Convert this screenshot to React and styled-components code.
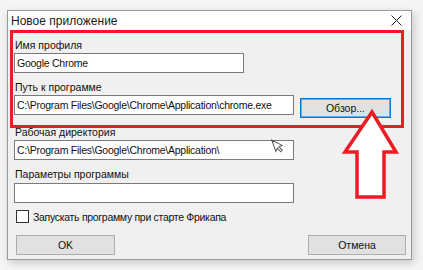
import styled, { createGlobalStyle } from 'styled-components';

const GlobalStyle = createGlobalStyle`
  html, body {
    margin: 0;
    padding: 0;
    background: #f4f4f4;
    font-family: "Liberation Sans", Arial, sans-serif;
  }
`;

const Page = styled.div`
  position: relative;
  width: 423px;
  height: 270px;
  padding: 10px 11px 10px 7px;
  box-sizing: border-box;
  overflow: hidden;
`;

const Window = styled.div`
  width: 405px;
  height: 250px;
  box-sizing: border-box;
  border: 1px solid #9a9a9a;
  background: #f0f0f0;
  box-shadow: 2px 3px 8px rgba(0, 0, 0, 0.18);
  display: flex;
  flex-direction: column;
`;

const TitleBar = styled.div`
  height: 19px;
  background: #fff;
  display: flex;
  align-items: center;
  justify-content: space-between;
  padding: 0 9px 0 3px;
  font-size: 12px;
  color: #1a1a1a;
`;

const Body = styled.div`
  flex: 1;
  display: flex;
  flex-direction: column;
  padding: 0 7px 0 2px;
`;

const RedFrame = styled.div`
  border: 3px solid #ec1c24;
  padding: 6px 0 7px 1px;
  display: flex;
  flex-direction: column;
`;

const Fields = styled.div`
  display: flex;
  flex-direction: column;
  padding-left: 4px;
`;

const Label = styled.div`
  font-size: 10.5px;
  line-height: 13px;
  height: 13px;
  color: #111;
  padding-left: 1px;
  margin-top: ${p => p.$gap || 0}px;
  margin-bottom: ${p => p.$below || 1}px;
`;

const Input = styled.div`
  width: ${p => p.$w}px;
  height: 20px;
  box-sizing: border-box;
  border: 1px solid #7a7a7a;
  background: #fff;
  font-size: 10.5px;
  letter-spacing: -0.25px;
  line-height: 18px;
  padding-left: 2px;
  color: #111;
  white-space: nowrap;
  overflow: hidden;
`;

const Row = styled.div`
  display: flex;
  align-items: flex-start;
  gap: 6px;
`;

const Button = styled.div`
  width: ${p => p.$w}px;
  height: 20px;
  box-sizing: border-box;
  margin-top: ${p => p.$top || 0}px;
  background: #e1e1e1;
  border: 1px solid ${p => (p.$focus ? '#0078d7' : '#adadad')};
  box-shadow: ${p => (p.$focus ? 'inset 0 0 0 1px #6aa8e0' : 'none')};
  display: flex;
  align-items: center;
  justify-content: center;
  font-size: 10.5px;
  color: #111;
`;

const CheckRow = styled.div`
  display: flex;
  align-items: center;
  gap: 4px;
  margin-top: 7px;
  padding-left: 2px;
  font-size: 10.5px;
  letter-spacing: -0.3px;
  color: #111;
`;

const Box = styled.div`
  width: 13px;
  height: 13px;
  box-sizing: border-box;
  border: 1px solid #333;
  background: #fff;
`;

const Footer = styled.div`
  display: flex;
  justify-content: space-between;
  margin: 12px -2px 0 0;
  padding-left: 6px;
`;

const Overlay = styled.svg`
  position: absolute;
  left: ${p => p.$x}px;
  top: ${p => p.$y}px;
`;

function CloseIcon() {
  return (
    <svg width="11" height="11" viewBox="0 0 11 11">
      <path d="M0.5 0.5 L10.5 10.5 M10.5 0.5 L0.5 10.5" stroke="#222" strokeWidth="1" />
    </svg>
  );
}

export default function App() {
  return (
    <Page>
      <GlobalStyle />
      <Window>
        <TitleBar>
          <span>Новое приложение</span>
          <CloseIcon />
        </TitleBar>
        <Body>
          <RedFrame>
            <Label $below={1}>Имя профиля</Label>
            <Input $w={230}>Google Chrome</Input>
            <Label $gap={8} $below={0}>Путь к программе</Label>
            <Row>
              <Input $w={280}>C:\Program Files\Google\Chrome\Application\chrome.exe</Input>
              <Button $w={91} $top={3} $focus>Обзор...</Button>
            </Row>
          </RedFrame>
          <Fields>
            <Label $gap={-2} $below={0}>Рабочая директория</Label>
            <Input $w={280}>C:\Program Files\Google\Chrome\Application\</Input>
            <Label $gap={8} $below={2}>Параметры программы</Label>
            <Input $w={280} />
            <CheckRow>
              <Box />
              <span>Запускать программу при старте Фрикапа</span>
            </CheckRow>
          </Fields>
          <Footer>
            <Button $w={99}>OK</Button>
            <Button $w={98}>Отмена</Button>
          </Footer>
        </Body>
      </Window>
      <Overlay $x={268} $y={138} width="16" height="18" viewBox="0 0 16 18">
        <path d="M6 1 L6 13 L8.5 10.5 L10.5 15 L12.5 14 L10.5 9.8 L14 9.5 Z" fill="#fff" stroke="#555" strokeWidth="1" transform="rotate(-20 8 8)" />
      </Overlay>
      <Overlay $x={340} $y={105} width="62" height="96" viewBox="0 0 62 96">
        <polygon
          points="32,7 56,47 44,47 44,92 17,92 17,47 5,47"
          fill="#fff"
          stroke="#ec1c24"
          strokeWidth="3.5"
          strokeLinejoin="miter"
        />
      </Overlay>
    </Page>
  );
}
